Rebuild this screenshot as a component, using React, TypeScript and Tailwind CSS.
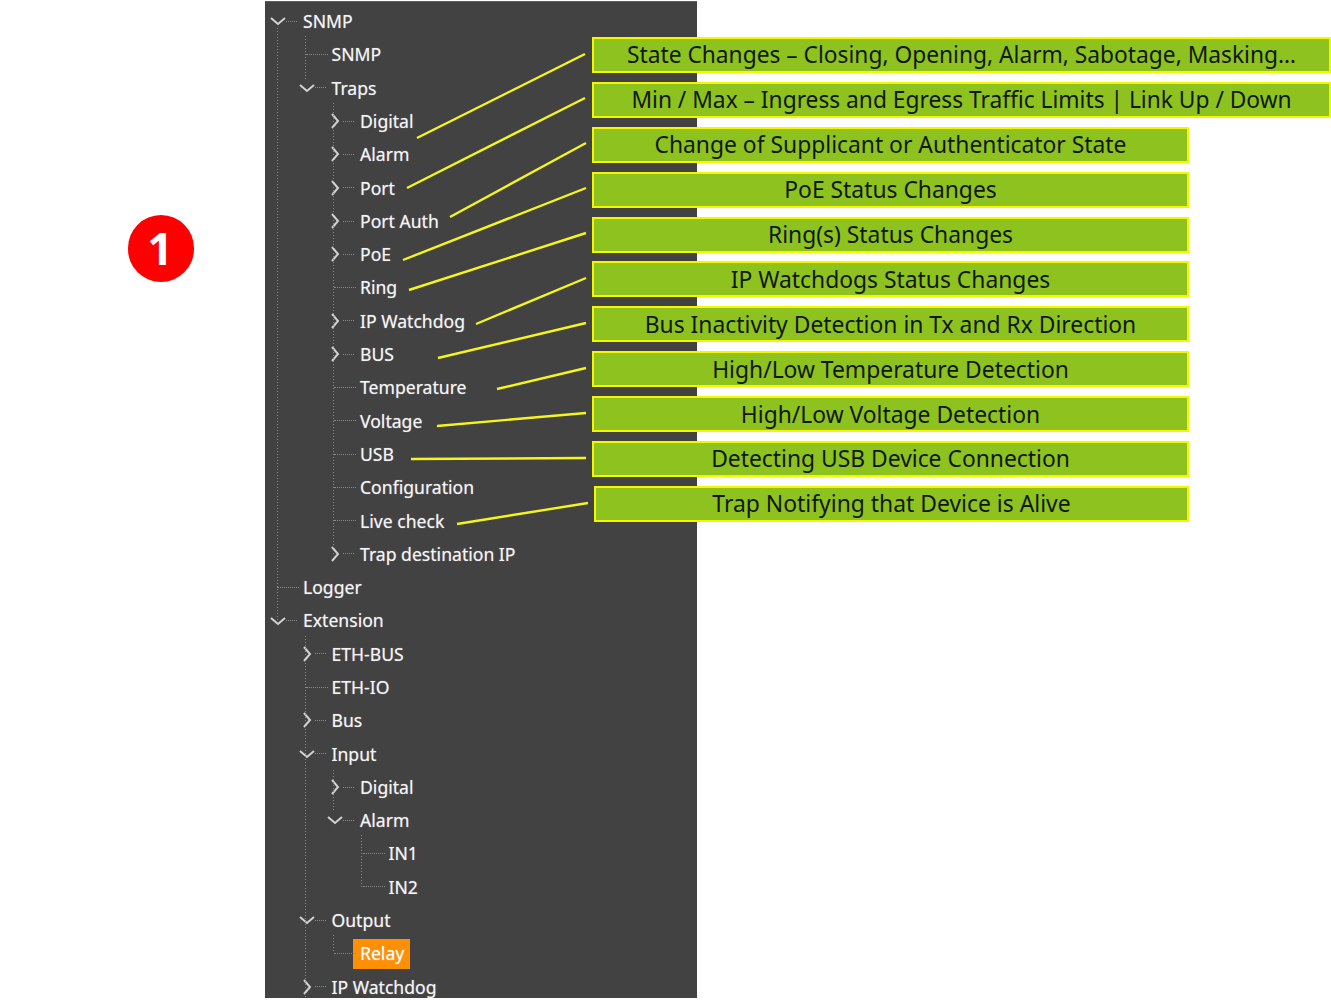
const rows: { d: 0 | 1 | 2 | 3; t: string; c?: "o" | "c"; sel?: boolean }[] = [
  { d: 0, t: "SNMP", c: "o" },
  { d: 1, t: "SNMP" },
  { d: 1, t: "Traps", c: "o" },
  { d: 2, t: "Digital", c: "c" },
  { d: 2, t: "Alarm", c: "c" },
  { d: 2, t: "Port", c: "c" },
  { d: 2, t: "Port Auth", c: "c" },
  { d: 2, t: "PoE", c: "c" },
  { d: 2, t: "Ring" },
  { d: 2, t: "IP Watchdog", c: "c" },
  { d: 2, t: "BUS", c: "c" },
  { d: 2, t: "Temperature" },
  { d: 2, t: "Voltage" },
  { d: 2, t: "USB" },
  { d: 2, t: "Configuration" },
  { d: 2, t: "Live check" },
  { d: 2, t: "Trap destination IP", c: "c" },
  { d: 0, t: "Logger" },
  { d: 0, t: "Extension", c: "o" },
  { d: 1, t: "ETH-BUS", c: "c" },
  { d: 1, t: "ETH-IO" },
  { d: 1, t: "Bus", c: "c" },
  { d: 1, t: "Input", c: "o" },
  { d: 2, t: "Digital", c: "c" },
  { d: 2, t: "Alarm", c: "o" },
  { d: 3, t: "IN1" },
  { d: 3, t: "IN2" },
  { d: 1, t: "Output", c: "o" },
  { d: 2, t: "Relay", sel: true },
  { d: 1, t: "IP Watchdog", c: "c" },
];

const indent = ["w-0", "w-[28.5px]", "w-[57px]", "w-[85.5px]"];

const labels: { t: string; wide?: boolean; last?: boolean }[] = [
  { t: "State Changes – Closing, Opening, Alarm, Sabotage, Masking…", wide: true },
  { t: "Min / Max – Ingress and Egress Traffic Limits | Link Up / Down", wide: true },
  { t: "Change of Supplicant or Authenticator State" },
  { t: "PoE Status Changes" },
  { t: "Ring(s) Status Changes" },
  { t: "IP Watchdogs Status Changes" },
  { t: "Bus Inactivity Detection in Tx and Rx Direction" },
  { t: "High/Low Temperature Detection" },
  { t: "High/Low Voltage Detection" },
  { t: "Detecting USB Device Connection" },
  { t: "Trap Notifying that Device is Alive", last: true },
];

const lines = [
  [417, 138, 585, 54],
  [407, 188, 585, 98],
  [450, 217, 586, 143],
  [403, 260, 586, 188],
  [409, 290, 586, 233],
  [476, 324, 586, 278],
  [438, 358, 586, 323],
  [497, 389, 586, 368],
  [437, 426, 586, 413],
  [411, 459, 586, 458],
  [457, 524, 588, 503],
];

const guides = [
  [277.5, 28, 277.5, 621],
  [305.5, 36, 305.5, 80],
  [333.5, 103, 333.5, 554],
  [305.5, 636, 305.5, 998],
  [333.5, 770, 333.5, 812],
  [361.5, 835, 361.5, 887],
  [333.5, 935, 333.5, 953],
];

function Chevron({ open }: { open: boolean }) {
  return (
    <svg width="16" height="16" viewBox="0 0 16 16" fill="none" stroke="#d2d2d2" strokeWidth="2">
      {open ? <path d="M1 5 L8 11 L15 5" /> : <path d="M5 1 L11 8 L5 15" />}
    </svg>
  );
}

function Row({ d, t, c, sel }: (typeof rows)[number]) {
  return (
    <div className="flex h-[33.3px] shrink-0 items-center">
      <div className={`${indent[d]} shrink-0`} />
      <div className="relative flex h-full w-[38px] shrink-0 items-center">
        {c ? (
          <>
            <div className="flex w-[26px] shrink-0 justify-center">
              <Chevron open={c === "o"} />
            </div>
            <div className="-ml-[5px] w-[11px] border-t border-dotted border-[#8a8a8a]" />
          </>
        ) : (
          <div className="ml-[12px] w-[22px] border-t border-dotted border-[#8a8a8a]" />
        )}
      </div>
      {sel ? (
        <span className="-ml-[7px] flex h-[30px] w-[57px] items-center bg-[#ff9005] pl-[7px] text-white">{t}</span>
      ) : (
        <span>{t}</span>
      )}
    </div>
  );
}

export default function App() {
  return (
    <div className="relative flex h-[1000px] w-[1331px] overflow-hidden bg-white font-['Noto_Sans','Open_Sans',sans-serif]">
      <div className="w-[265px] shrink-0 pl-[128px] pt-[215px]">
        <div className="flex h-[67px] w-[66px] items-center justify-center rounded-full bg-[#fe0000] pb-[2px] pr-[2px] text-[45px] font-bold leading-none text-white">
          1
        </div>
      </div>

      <div className="relative mt-[1px] flex h-[997px] w-[432px] shrink-0 flex-col overflow-hidden border-t border-[#5f5f5f] bg-[#424242] pt-[2.6px] text-[17.6px] text-[#f4f4f4] [text-shadow:0_0_1px_rgba(255,255,255,0.5)]">
        {rows.map((r, i) => (
          <Row key={i} {...r} />
        ))}
      </div>

      {/* tree guides and callout leader lines */}
      <svg className="pointer-events-none absolute left-0 top-0" width="1331" height="1000" fill="none">
        {guides.map(([a, b, c, e], i) => (
          <line key={i} x1={a} y1={b} x2={c} y2={e} stroke="#8a8a8a" strokeDasharray="1 2" />
        ))}
        {lines.map(([a, b, c, e], i) => (
          <line key={i} x1={a} y1={b} x2={c} y2={e} stroke="#f5f51e" strokeWidth="2.4" />
        ))}
      </svg>

      <div className="absolute left-[592px] top-[37px] flex flex-col gap-[8.9px] text-[#10180a]">
        {labels.map((l) => (
          <div
            key={l.t}
            className={`flex h-[36px] items-center justify-center border-2 border-[#f5f700] bg-[#8dc21f] pt-[1px] ${
              l.wide ? "w-[739px] text-[22.75px]" : l.last ? "ml-[2px] w-[595px] text-[22.9px]" : "w-[597px] text-[22.85px]"
            }`}
          >
            {l.t}
          </div>
        ))}
      </div>
    </div>
  );
}
